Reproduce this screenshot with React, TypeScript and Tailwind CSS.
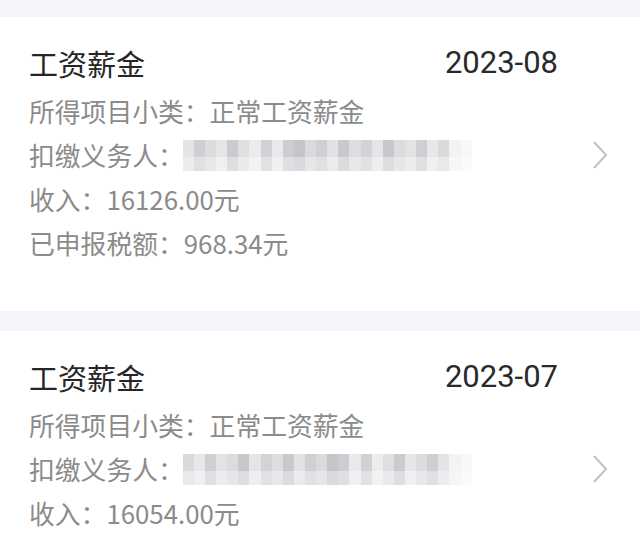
const font = { fontFamily: '"Noto Sans CJK SC", "Noto Sans", sans-serif' };
const dateFont = { fontFamily: 'Roboto, "Noto Sans", sans-serif' };

const shades1 = [
  "#e4e4e6", "#cfcfd3", "#dcdcdf", "#e6e6e8", "#cbcbcf", "#dfdfe2", "#ececee", "#d2d2d6",
  "#e9e9eb", "#cdcdd1", "#c5c5c9", "#dadadd", "#d0d0d4", "#e2e2e5", "#c9c9cd", "#dedee1",
  "#d3d3d7", "#e5e5e7", "#c8c8cc", "#dcdcdf", "#e3e3e6", "#cfcfd3", "#e8e8ea", "#dadadd",
  "#f2f2f3", "#f7f7f8",
];
const shades2 = [
  "#ececee", "#e0e0e3", "#e8e8ea", "#efeff1", "#dedee1", "#eaeaec", "#f2f2f3", "#e2e2e5",
  "#efeff1", "#dfdfe2", "#dadade", "#e6e6e9", "#e1e1e4", "#ebebed", "#dcdcdf", "#e8e8ea",
  "#e2e2e5", "#eeeef0", "#dddde0", "#e7e7e9", "#ececee", "#e0e0e3", "#f0f0f2", "#e9e9eb",
  "#f6f6f7", "#fafafa",
];

function Mosaic({ flip }: { flip?: boolean }) {
  const a = flip ? [...shades1].reverse().slice(2).concat(["#f3f3f4", "#f8f8f9"]) : shades1;
  const b = flip ? [...shades2].reverse().slice(2).concat(["#f6f6f7", "#fafafa"]) : shades2;
  return (
    <div className="flex flex-col w-[289px] h-[31px] blur-[0.6px]">
      <div className="flex h-[17px]">
        {a.map((c, i) => (
          <div key={i} className="flex-1" style={{ backgroundColor: c }} />
        ))}
      </div>
      <div className="flex h-[14px]">
        {b.map((c, i) => (
          <div key={i} className="flex-1" style={{ backgroundColor: c }} />
        ))}
      </div>
    </div>
  );
}

function Chevron() {
  return (
    <svg width="18" height="30" viewBox="0 0 18 30" className="mr-[-2px]">
      <path d="M3 2 L15 15 L3 28" fill="none" stroke="#c2c2c4" strokeWidth="2" />
    </svg>
  );
}

function RecordCard({
  date,
  income,
  tax,
  flip,
}: {
  date: string;
  income: string;
  tax?: string;
  flip?: boolean;
}) {
  return (
    <div className="bg-white pl-[29px] pr-[33px] pt-[23px] pb-[46px]">
      <div className="flex items-center justify-between leading-[46px] pr-[49px]">
        <span className="text-[29px] text-[#262626]">工资薪金</span>
        <span className="text-[31px] text-[#2a2a2a]" style={dateFont}>
          {date}
        </span>
      </div>
      <div className="mt-[3px] text-[25.8px] leading-[44px] text-[#8b8b8b]">
        <div>所得项目小类：正常工资薪金</div>
        <div className="flex items-center justify-between">
          <div className="flex items-center">
            <span>扣缴义务人：</span>
            <span className="ml-[-1px]">
              <Mosaic flip={flip} />
            </span>
          </div>
          <Chevron />
        </div>
        <div>收入：{income}元</div>
        {tax && <div>已申报税额：{tax}元</div>}
      </div>
    </div>
  );
}

export default function App() {
  return (
    <div className="w-[640px] h-[541px] overflow-hidden bg-[#f4f5f8] pt-[17px] flex flex-col gap-[20px]" style={font}>
      <RecordCard date="2023-08" income="16126.00" tax="968.34" />
      <RecordCard date="2023-07" income="16054.00" flip />
    </div>
  );
}
